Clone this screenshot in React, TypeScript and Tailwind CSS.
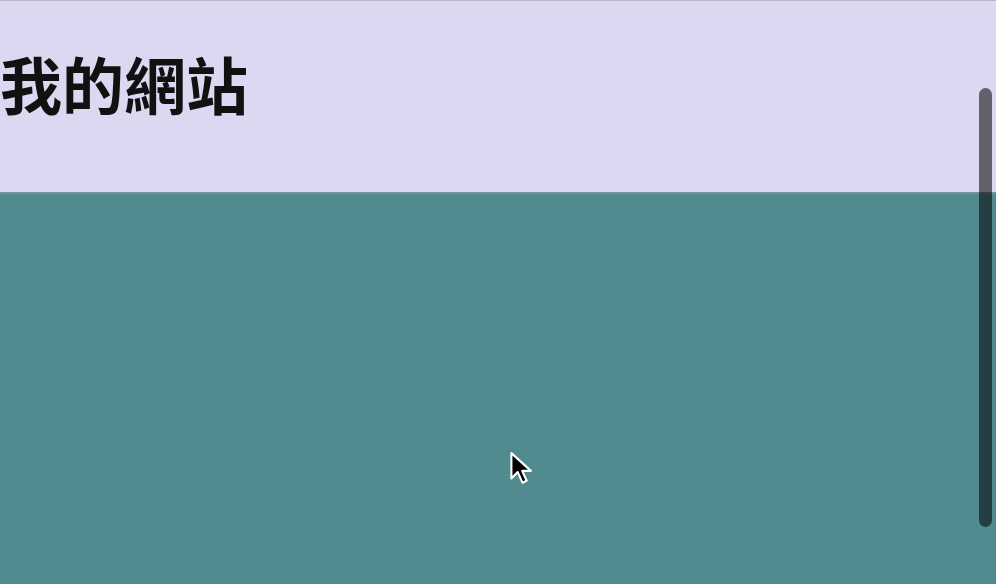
import React from 'react';

// Page with a lavender header band and a teal body
const App: React.FC = () => {
  return (
    <div className="relative h-[584px] w-[996px] overflow-hidden bg-[#518b90]">
      {/* Header */}
      <header className="h-[194px] border-t border-[#b9b6c4] border-b-2 border-b-[#7d8f97] bg-[#ddd8f1]">
        <h1
          className="pt-[51px] text-[62px] font-bold leading-none text-[#111]"
          style={{ fontFamily: '"Noto Sans CJK TC", "Noto Sans CJK SC", serif' }}
        >
          我的網站
        </h1>
      </header>

      {/* Main body */}
      <main className="h-full bg-[#518b90]" />

      {/* Overlay scrollbar */}
      <div className="absolute right-[4px] top-[88px] h-[439px] w-[13px] rounded-full bg-black/55" />

      {/* Mouse cursor */}
      <svg
        className="absolute left-[509px] top-[451px]"
        width="28"
        height="38"
        viewBox="0 0 26 36"
      >
        <path
          d="M2 2 L2 26 L8 20 L12.5 30 L16.5 28.2 L12.2 18.8 L20.5 18.8 Z"
          fill="#000"
          stroke="#fff"
          strokeWidth="2"
          strokeLinejoin="round"
        />
      </svg>
    </div>
  );
};

export default App;
